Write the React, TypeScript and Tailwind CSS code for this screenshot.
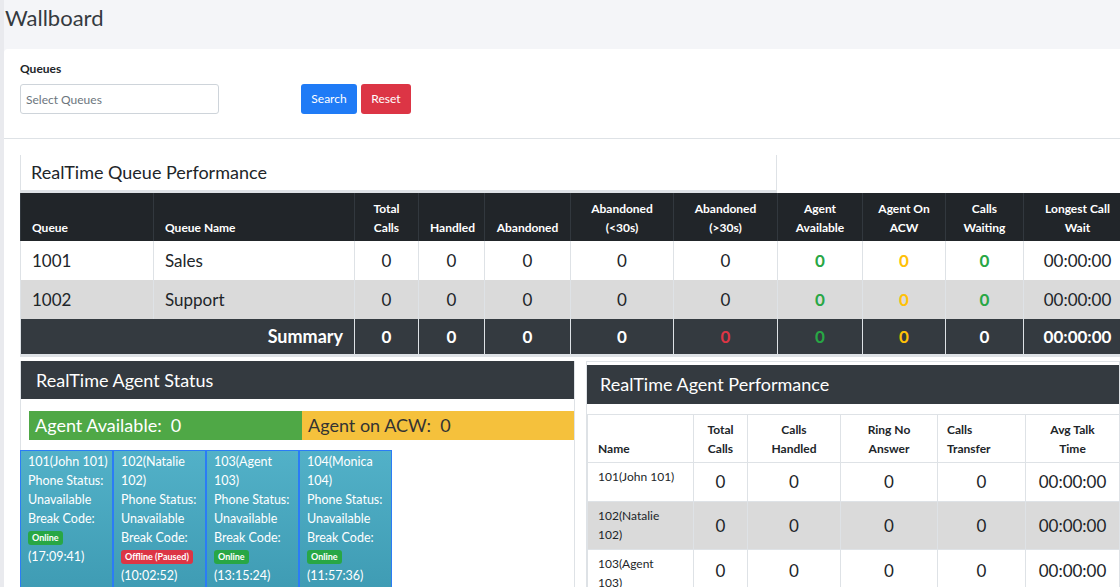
const QUEUES = [
  { id: "1001", name: "Sales" },
  { id: "1002", name: "Support" },
];

const AGENTS = [
  { lines: ["101(John 101)"], status: "Online", time: "17:09:41" },
  { lines: ["102(Natalie", "102)"], status: "Offline (Paused)", time: "10:02:52" },
  { lines: ["103(Agent", "103)"], status: "Online", time: "13:15:24" },
  { lines: ["104(Monica", "104)"], status: "Online", time: "11:57:36" },
];

const QUEUE_COLS = [133, 201, 64, 66, 86, 103, 104, 85, 83, 78, 108];

function HeadCell({ children, left }: { children: React.ReactNode; left?: boolean }) {
  return (
    <th
      className={`border-x border-[#32383e] px-[11px] pb-[4px] align-bottom text-[12px] font-bold leading-[19px] ${
        left ? "text-left" : "text-center"
      }`}
    >
      {children}
    </th>
  );
}

function QueueTable() {
  return (
    <table className="w-[1111px] table-fixed border-collapse">
      <colgroup>
        {QUEUE_COLS.map((w, i) => (
          <col key={i} style={{ width: w }} />
        ))}
      </colgroup>
      <thead>
        <tr className="h-[48px] bg-[#212529] text-white">
          <HeadCell left>Queue</HeadCell>
          <HeadCell left>Queue Name</HeadCell>
          <HeadCell>
            Total
            <br />
            Calls
          </HeadCell>
          <HeadCell>Handled</HeadCell>
          <HeadCell>Abandoned</HeadCell>
          <HeadCell>
            Abandoned
            <br />
            (&lt;30s)
          </HeadCell>
          <HeadCell>
            Abandoned
            <br />
            (&gt;30s)
          </HeadCell>
          <HeadCell>
            Agent
            <br />
            Available
          </HeadCell>
          <HeadCell>
            Agent On
            <br />
            ACW
          </HeadCell>
          <HeadCell>
            Calls
            <br />
            Waiting
          </HeadCell>
          <HeadCell>
            Longest Call
            <br />
            Wait
          </HeadCell>
        </tr>
      </thead>
      <tbody className="text-[17px]">
        {QUEUES.map((q, i) => (
          <tr key={q.id} className={`h-[39px] ${i % 2 ? "bg-[#dadada]" : "bg-white"}`}>
            <td className="border-x border-[#dee2e6] px-[11px]">{q.id}</td>
            <td className="border-x border-[#dee2e6] px-[11px]">{q.name}</td>
            {[0, 1, 2, 3, 4].map((k) => (
              <td key={k} className="border-x border-[#dee2e6] text-center">
                0
              </td>
            ))}
            <td className="border-x border-[#dee2e6] text-center font-bold text-[#28a745]">0</td>
            <td className="border-x border-[#dee2e6] text-center font-bold text-[#ffc107]">0</td>
            <td className="border-x border-[#dee2e6] text-center font-bold text-[#28a745]">0</td>
            <td className="border-x border-[#dee2e6] text-center">00:00:00</td>
          </tr>
        ))}
        <tr className="h-[35px] bg-[#343a40] font-bold text-white">
          <td colSpan={2} className="border-x border-[#dee2e6] px-[11px] text-right text-[18px]">
            Summary
          </td>
          <td className="border-x border-[#dee2e6] text-center">0</td>
          <td className="border-x border-[#dee2e6] text-center">0</td>
          <td className="border-x border-[#dee2e6] text-center">0</td>
          <td className="border-x border-[#dee2e6] text-center">0</td>
          <td className="border-x border-[#dee2e6] text-center text-[#dc3545]">0</td>
          <td className="border-x border-[#dee2e6] text-center text-[#28a745]">0</td>
          <td className="border-x border-[#dee2e6] text-center text-[#ffc107]">0</td>
          <td className="border-x border-[#dee2e6] text-center">0</td>
          <td className="border-x border-[#dee2e6] text-center">00:00:00</td>
        </tr>
      </tbody>
    </table>
  );
}

function AgentCard({ agent }: { agent: (typeof AGENTS)[number] }) {
  const online = agent.status === "Online";
  return (
    <div className="w-[93px] shrink-0 border border-[#2b7cf6] bg-gradient-to-b from-[#52b1c8] to-[#3f9cb4] px-[7px] pt-[1px] pb-[2px] text-[12.5px] leading-[19px] whitespace-nowrap text-white">
      {agent.lines.map((l) => (
        <div key={l}>{l}</div>
      ))}
      <div>Phone Status:</div>
      <div>Unavailable</div>
      <div>Break Code:</div>
      <div className="flex h-[19px] items-center">
        <span
          className={`rounded-[3px] px-[4px] text-[9px] leading-[14px] font-bold ${
            online ? "bg-[#28a745]" : "bg-[#dc3545]"
          }`}
        >
          {agent.status}
        </span>
      </div>
      <div>({agent.time})</div>
    </div>
  );
}

function AgentStatus() {
  return (
    <div className="w-[555px] shrink-0 border-x border-[#dee2e6]">
      <div className="flex h-[38px] items-center bg-[#343a40] pl-[15px] text-[18px] text-white">
        RealTime Agent Status
      </div>
      <div className="mt-[12px] ml-[8px] flex h-[29px] text-[18px] leading-[29px]">
        <div className="w-[273px] bg-[#4fa846] pl-[6px] text-white">Agent Available:&nbsp; 0</div>
        <div className="flex-1 bg-[#f5c13c] pl-[6px] text-[#333]">Agent on ACW:&nbsp; 0</div>
      </div>
      <div className="mt-[10px] -ml-px flex">
        {AGENTS.map((a) => (
          <AgentCard key={a.time} agent={a} />
        ))}
      </div>
    </div>
  );
}

const PERF_COLS = [106, 54, 93, 97, 88, 94];

function AgentPerformance() {
  return (
    <div className="w-[534px] shrink-0 border border-[#dee2e6] pt-[3px]">
      <div className="flex h-[39px] items-center bg-[#343a40] pl-[13px] text-[18px] text-white">
        RealTime Agent Performance
      </div>
      <table className="mt-[10px] w-[532px] table-fixed border-collapse">
        <colgroup>
          {PERF_COLS.map((w, i) => (
            <col key={i} style={{ width: w }} />
          ))}
        </colgroup>
        <thead>
          <tr className="h-[48px] text-[12px] leading-[19px] font-bold">
            <th className="border border-[#dee2e6] px-[10px] pb-[4px] text-left align-bottom">Name</th>
            <th className="border border-[#dee2e6] pb-[4px] text-center align-bottom">
              Total
              <br />
              Calls
            </th>
            <th className="border border-[#dee2e6] pb-[4px] text-center align-bottom">
              Calls
              <br />
              Handled
            </th>
            <th className="border border-[#dee2e6] pb-[4px] text-center align-bottom">
              Ring No
              <br />
              Answer
            </th>
            <th className="border border-[#dee2e6] px-[9px] pb-[4px] text-left align-bottom">
              Calls
              <br />
              Transfer
            </th>
            <th className="border border-[#dee2e6] pb-[4px] text-center align-bottom">
              Avg Talk
              <br />
              Time
            </th>
          </tr>
        </thead>
        <tbody>
          {AGENTS.slice(0, 3).map((a, i) => (
            <tr key={a.time} className={`${i === 1 ? "h-[48px] bg-[#dadada]" : "h-[39px] bg-white"}`}>
              <td className="border border-[#dee2e6] px-[10px] pt-[4px] align-top text-[12px] leading-[19px]">
                {a.lines.map((l) => (
                  <div key={l}>{l}</div>
                ))}
              </td>
              {[0, 1, 2, 3].map((k) => (
                <td key={k} className="border border-[#dee2e6] text-center text-[17px]">
                  0
                </td>
              ))}
              <td className="border border-[#dee2e6] text-center text-[17px]">00:00:00</td>
            </tr>
          ))}
        </tbody>
      </table>
    </div>
  );
}

export default function App() {
  return (
    <div className="h-[587px] w-[1120px] overflow-hidden border-l-4 border-[#e9eaee] bg-[#f4f5f8] font-['Lato',sans-serif] text-[#212529]">
      <h1 className="h-[49px] pl-px pt-[4px] text-[22px] leading-[28px] text-[#343a40]">Wallboard</h1>
      <div className="w-[1130px] rounded-tl-[4px] bg-white">
        <div className="border-b border-[#dee2e6] px-4 pt-[13px] pb-[24px]">
          <div className="text-[12px] leading-[14px] font-bold">Queues</div>
          <div className="mt-[8px] flex items-center">
            <input
              placeholder="Select Queues"
              className="h-[30px] w-[199px] rounded-[3px] border border-[#ced4da] px-[5px] text-[12px] text-[#495057] placeholder:text-[#6c757d] outline-none"
            />
            <button className="ml-[82px] h-[30px] w-[56px] rounded-[3px] bg-[#1f7bf6] text-[12px] text-white">
              Search
            </button>
            <button className="ml-[4px] h-[30px] w-[50px] rounded-[3px] bg-[#dc3545] text-[12px] text-white">
              Reset
            </button>
          </div>
        </div>
        <div className="px-4 pt-4">
          <div className="flex h-[38px] w-[757px] items-center border-x border-b-[3px] border-[#dee2e6] pl-[10px] text-[18px]">
            RealTime Queue Performance
          </div>
          <div className="w-[1111px] border-b-[3px] border-[#dee2e6]">
            <QueueTable />
          </div>
          <div className="mt-[4px] flex gap-[11px]">
            <AgentStatus />
            <AgentPerformance />
          </div>
        </div>
      </div>
    </div>
  );
}
